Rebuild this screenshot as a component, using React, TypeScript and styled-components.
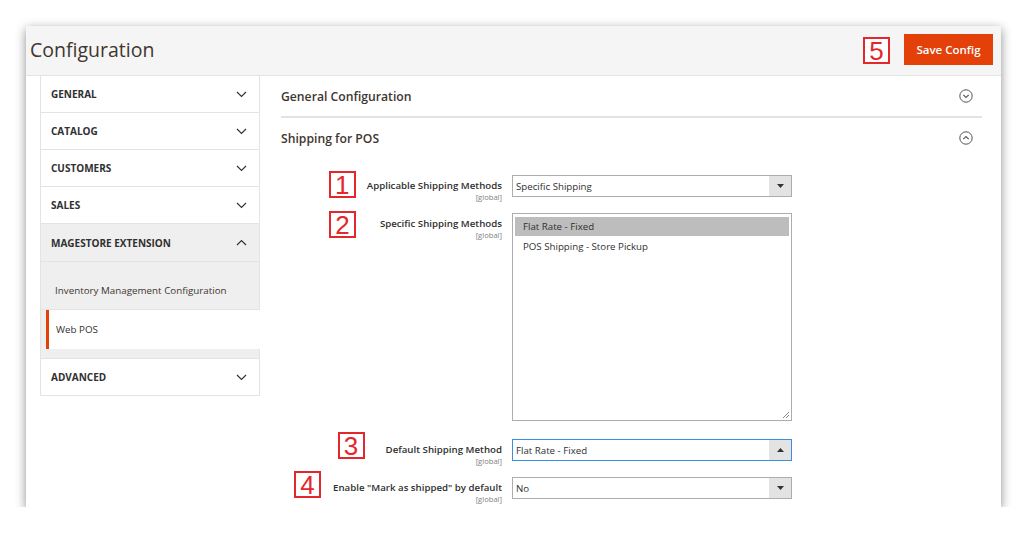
import styled, { createGlobalStyle } from "styled-components";

const GlobalStyle = createGlobalStyle`
	body {
		margin: 0;
		background: #ffffff;
		font-family: "Open Sans", "Liberation Sans", sans-serif;
		color: #303030;
	}
`;

const Page = styled.div`
	padding: 26px 26px 0 26px;
`;

const Card = styled.div`
	width: 975px;
	height: 481px;
	background: #ffffff;
	box-shadow: 0 3px 10px rgba(0, 0, 0, 0.45);
	overflow: hidden;
	display: flex;
	flex-direction: column;
`;

const Header = styled.header`
	height: 49px;
	flex-shrink: 0;
	background: #f5f5f5;
	border-bottom: 1px solid #e3e3e3;
	display: flex;
	align-items: center;
	padding: 0 8px 0 4px;
`;

const Title = styled.h1`
	margin: 0;
	font-size: 19.5px;
	font-weight: 400;
	color: #41362f;
	flex: 1;
	padding-bottom: 3px;
`;

const Marker = styled.span<{ $top?: number; $gap?: number }>`
	box-sizing: border-box;
	width: 27px;
	height: 27px;
	flex-shrink: 0;
	display: flex;
	align-items: center;
	justify-content: center;
	border: 2px solid #e5262b;
	background: #ffffff;
	color: #e5262b;
	font-family: "Liberation Sans", Arial, sans-serif;
	font-size: 26px;
	line-height: 1;
	margin-top: ${(p) => p.$top ?? 0}px;
	margin-right: ${(p) => p.$gap ?? 0}px;
`;

const SaveButton = styled.button`
	margin-left: 14px;
	width: 89px;
	height: 31px;
	border: none;
	background: #e3400a;
	color: #ffffff;
	font-family: "Open Sans", sans-serif;
	font-size: 11.5px;
	font-weight: 600;
	margin-top: -2px;
`;

const Body = styled.div`
	display: flex;
	flex: 1;
`;

const Sidebar = styled.nav`
	margin-left: 14px;
	width: 218px;
	align-self: flex-start;
	border-left: 1px solid #e3e3e3;
	border-right: 1px solid #e3e3e3;
`;

const Section = styled.div<{ $open?: boolean }>`
	box-sizing: border-box;
	height: ${(p) => (p.$open ? 38 : 37)}px;
	border-bottom: 1px solid #e3e3e3;
	background: ${(p) => (p.$open ? "#efefef" : "#ffffff")};
	display: flex;
	align-items: center;
	justify-content: space-between;
	padding: 0 12px 0 10px;
	font-size: 10px;
	font-weight: 700;
	color: #303030;
	text-transform: uppercase;
`;

const SubList = styled.div`
	background: #efefef;
	padding-bottom: 9px;
	border-bottom: 1px solid #e3e3e3;
`;

const SubItem = styled.div<{ $active?: boolean }>`
	height: ${(p) => (p.$active ? 39 : 48)}px;
	display: flex;
	align-items: ${(p) => (p.$active ? "center" : "flex-end")};
	padding: ${(p) => (p.$active ? "0 0 0 7px" : "0 0 12px 14px")};
	box-sizing: border-box;
	font-size: 9.8px;
	color: ${(p) => (p.$active ? "#303030" : "#41362f")};
	background: ${(p) => (p.$active ? "#ffffff" : "transparent")};
	border-left: ${(p) => (p.$active ? "3px solid #e3400a" : "none")};
	margin-left: ${(p) => (p.$active ? 5 : 0)}px;
	margin-right: ${(p) => (p.$active ? -1 : 0)}px;
	border-bottom: ${(p) => (p.$active ? "none" : "1px solid #e3e3e3")};
`;

const Main = styled.main`
	flex: 1;
	padding: 0 19px 0 21px;
`;

const Panel = styled.div<{ $divider?: boolean }>`
	box-sizing: border-box;
	height: 42px;
	display: flex;
	align-items: center;
	justify-content: space-between;
	border-bottom: 2px solid ${(p) => (p.$divider ? "#e3e3e3" : "transparent")};
	font-size: 12.2px;
	font-weight: 600;
	color: #41362f;
	padding-right: 9px;
`;

const Form = styled.div`
	padding-top: 15px;
	display: flex;
	flex-direction: column;
`;

const Row = styled.div<{ $gap: number }>`
	display: flex;
	align-items: flex-start;
	margin-bottom: ${(p) => p.$gap}px;
`;

const LabelCol = styled.div`
	width: 221px;
	height: 22px;
	display: flex;
	justify-content: flex-end;
	align-items: flex-start;
	margin-right: 10px;
`;

const LabelText = styled.div`
	text-align: right;
	padding-top: 4px;
`;

const LabelName = styled.div`
	font-size: 9.7px;
	font-weight: 600;
	color: #303030;
	line-height: 14px;
	white-space: nowrap;
`;

const Scope = styled.div`
	font-size: 7.6px;
	color: #808080;
	line-height: 8px;
`;

const Select = styled.div<{ $focus?: boolean }>`
	width: 278px;
	height: 20px;
	border: 1px solid ${(p) => (p.$focus ? "#3a8fe0" : "#adadad")};
	display: flex;
	align-items: center;
	font-size: 9.7px;
	color: #303030;
`;

const SelectValue = styled.span`
	flex: 1;
	padding-left: 3px;
`;

const Arrow = styled.span`
	width: 22px;
	height: 100%;
	background: #e3e3e3;
	display: flex;
	align-items: center;
	justify-content: center;
`;

const MultiSelect = styled.div`
	position: relative;
	width: 274px;
	height: 200px;
	border: 1px solid #adadad;
	padding: 3px 2px;
	font-size: 9.7px;
	color: #303030;
`;

const Option = styled.div<{ $selected?: boolean }>`
	height: 19px;
	line-height: 19px;
	padding-left: 8px;
	background: ${(p) => (p.$selected ? "#bdbdbd" : "transparent")};
	margin-bottom: 1px;
`;

const Grip = styled.svg`
	position: absolute;
	right: 1px;
	bottom: 1px;
`;

function Chevron({ up }: { up?: boolean }) {
	return (
		<svg width="11" height="7" viewBox="0 0 11 7">
			<path
				d={up ? "M1 6L5.5 1.5L10 6" : "M1 1L5.5 5.5L10 1"}
				fill="none"
				stroke="#333"
				strokeWidth="1.2"
			/>
		</svg>
	);
}

function CircleChevron({ up }: { up?: boolean }) {
	return (
		<svg width="14" height="14" viewBox="0 0 14 14">
			<circle cx="7" cy="7" r="6.2" fill="none" stroke="#555" strokeWidth="1" />
			<path
				d={up ? "M4.3 8.2L7 5.5L9.7 8.2" : "M4.3 5.8L7 8.5L9.7 5.8"}
				fill="none"
				stroke="#555"
				strokeWidth="1.1"
			/>
		</svg>
	);
}

function Triangle({ up }: { up?: boolean }) {
	return (
		<svg width="7" height="4" viewBox="0 0 7 4">
			<path d={up ? "M0 4L3.5 0L7 4Z" : "M0 0L3.5 4L7 0Z"} fill="#333" />
		</svg>
	);
}

const sections = ["General", "Catalog", "Customers", "Sales"];

function App() {
	return (
		<Page>
			<GlobalStyle />
			<Card>
				<Header>
					<Title>Configuration</Title>
					<Marker>5</Marker>
					<SaveButton>Save Config</SaveButton>
				</Header>
				<Body>
					<Sidebar>
						{sections.map((s) => (
							<Section key={s}>
								{s}
								<Chevron />
							</Section>
						))}
						<Section $open>
							Magestore Extension
							<Chevron up />
						</Section>
						<SubList>
							<SubItem>Inventory Management Configuration</SubItem>
							<SubItem $active>Web POS</SubItem>
						</SubList>
						<Section>
							Advanced
							<Chevron />
						</Section>
					</Sidebar>
					<Main>
						<Panel $divider>
							General Configuration
							<CircleChevron />
						</Panel>
						<Panel>
							Shipping for POS
							<CircleChevron up />
						</Panel>
						<Form>
							<Row $gap={16}>
								<LabelCol>
									<Marker $top={-4} $gap={11}>1</Marker>
									<LabelText>
										<LabelName>Applicable Shipping Methods</LabelName>
										<Scope>[global]</Scope>
									</LabelText>
								</LabelCol>
								<Select>
									<SelectValue>Specific Shipping</SelectValue>
									<Arrow><Triangle /></Arrow>
								</Select>
							</Row>
							<Row $gap={18}>
								<LabelCol>
									<Marker $top={-2} $gap={24}>2</Marker>
									<LabelText>
										<LabelName>Specific Shipping Methods</LabelName>
										<Scope>[global]</Scope>
									</LabelText>
								</LabelCol>
								<MultiSelect>
									<Option $selected>Flat Rate - Fixed</Option>
									<Option>POS Shipping - Store Pickup</Option>
									<Grip width="8" height="8" viewBox="0 0 8 8">
										<path d="M7 1L1 7M7 4L4 7" stroke="#8a8a8a" strokeWidth="1" />
									</Grip>
								</MultiSelect>
							</Row>
							<Row $gap={16}>
								<LabelCol>
									<Marker $top={-7} $gap={21}>3</Marker>
									<LabelText>
										<LabelName>Default Shipping Method</LabelName>
										<Scope>[global]</Scope>
									</LabelText>
								</LabelCol>
								<Select $focus>
									<SelectValue>Flat Rate - Fixed</SelectValue>
									<Arrow><Triangle up /></Arrow>
								</Select>
							</Row>
							<Row $gap={0}>
								<LabelCol>
									<Marker $top={-6} $gap={12}>4</Marker>
									<LabelText>
										<LabelName>Enable "Mark as shipped" by default</LabelName>
										<Scope>[global]</Scope>
									</LabelText>
								</LabelCol>
								<Select>
									<SelectValue>No</SelectValue>
									<Arrow><Triangle /></Arrow>
								</Select>
							</Row>
						</Form>
					</Main>
				</Body>
			</Card>
		</Page>
	);
}

export default App;
